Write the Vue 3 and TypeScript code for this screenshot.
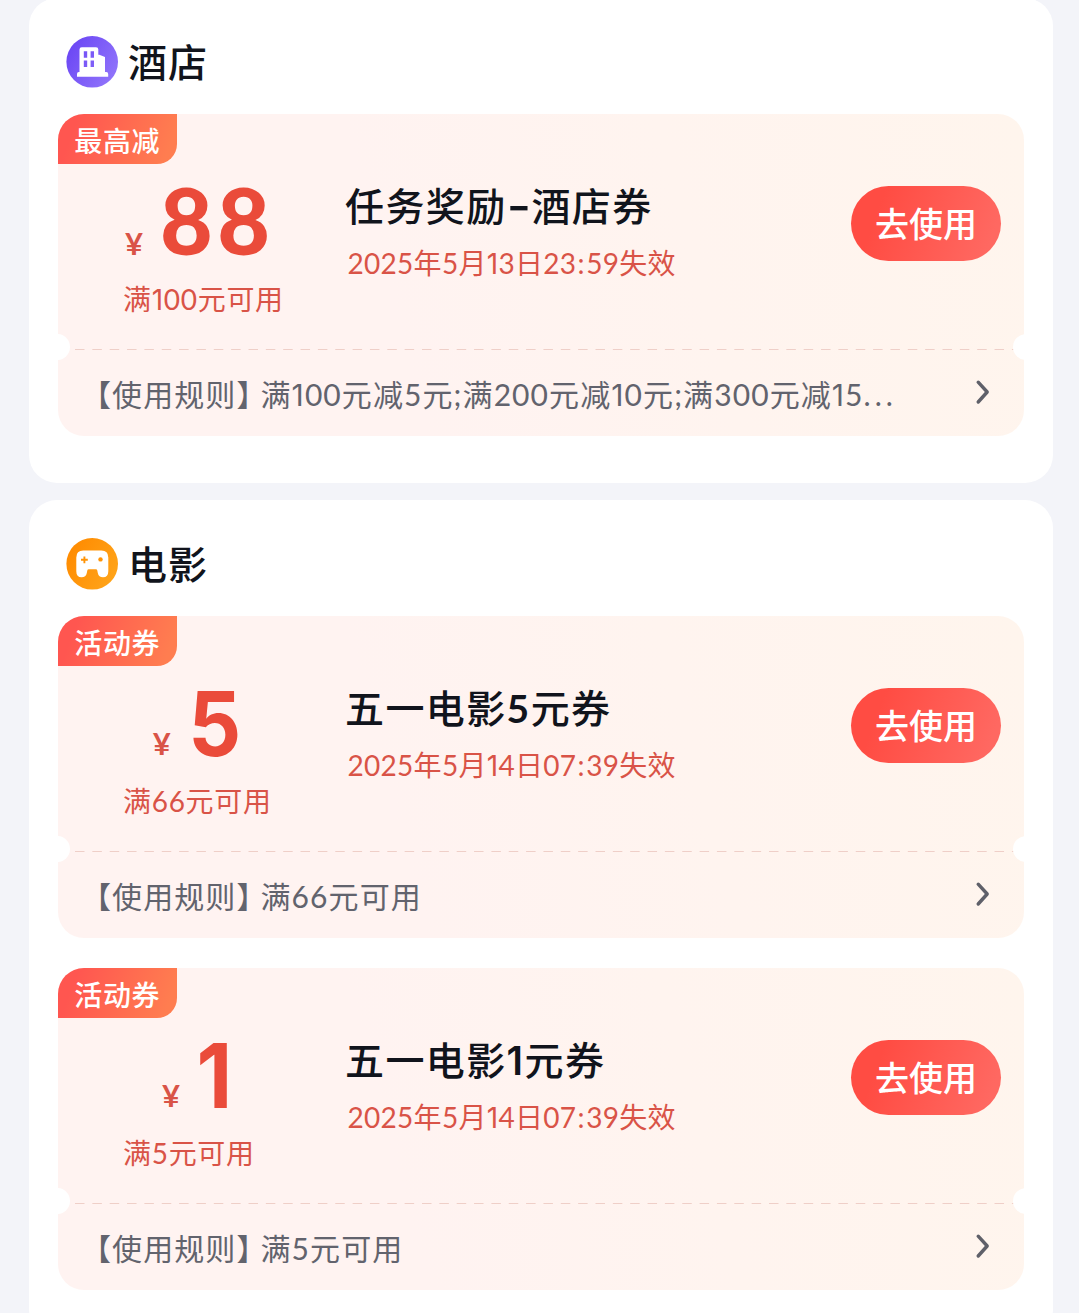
<script setup lang="ts">
interface Coupon {
  tag: string
  amount: string
  condition: string
  title: string
  expiry: string
  rule: string
}

interface Section {
  name: string
  icon: 'hotel' | 'movie'
  coupons: Coupon[]
}

interface Run {
  text: string
  kind: string
}

const sections: Section[] = [
  {
    name: '酒店',
    icon: 'hotel',
    coupons: [
      {
        tag: '最高减',
        amount: '88',
        condition: '满100元可用',
        title: '任务奖励-酒店券',
        expiry: '2025年5月13日23:59失效',
        rule: '满100元减5元;满200元减10元;满300元减15...',
      },
    ],
  },
  {
    name: '电影',
    icon: 'movie',
    coupons: [
      {
        tag: '活动券',
        amount: '5',
        condition: '满66元可用',
        title: '五一电影5元券',
        expiry: '2025年5月14日07:39失效',
        rule: '满66元可用',
      },
      {
        tag: '活动券',
        amount: '1',
        condition: '满5元可用',
        title: '五一电影1元券',
        expiry: '2025年5月14日07:39失效',
        rule: '满5元可用',
      },
    ],
  },
]

// Splits mixed text so that Latin digits and punctuation get their own face.
function runs(text: string): Run[] {
  const parts = text.match(/1|[02-9]+|-|:|;|\.+|[^0-9\-:;.]+/g) ?? []
  return parts.map((part) => {
    if (part === '1') return { text: part, kind: 'one' }
    if (/^[0-9]/.test(part)) return { text: part, kind: 'num' }
    if (part === '-') return { text: part, kind: 'dash' }
    if (part === ':') return { text: part, kind: 'colon' }
    if (part[0] === '.') return { text: part, kind: 'dots' }
    if (part === ';') return { text: part, kind: 'semi' }
    return { text: part, kind: 'han' }
  })
}
</script>

<template>
  <main class="page">
    <section v-for="section in sections" :key="section.name" class="card">
      <header class="card-head">
        <svg v-if="section.icon === 'hotel'" class="head-icon" viewBox="0 0 52 52">
          <defs>
            <linearGradient id="hotel-bg" x1="0" y1="0.2" x2="1" y2="0.8">
              <stop offset="0" stop-color="#6a45f4" />
              <stop offset="1" stop-color="#9276fb" />
            </linearGradient>
          </defs>
          <circle cx="26.200" cy="25.800" r="25.800" fill="url(#hotel-bg)" />
          <path
            fill="#fff"
            fill-rule="evenodd"
            d="M15.800 11.200h14.200q2.300 0 2.300 2.300v5.200h1l5.700 2.400v15h1.300q1.900 0 1.900 1.900v2.700H11v-2.700q0-1.900 1.900-1.900h.6V13.500q0-2.300 2.300-2.300zM17.800 15.300v6.400h3.400v-6.400zM24.600 15.300v6.400h3.400v-6.400zM17.800 24.500v6.400h3.400v-6.400zM24.600 24.500v6.400h3.400v-6.400z"
          />
        </svg>
        <svg v-else class="head-icon" viewBox="0 0 52 52">
          <defs>
            <linearGradient id="movie-bg" x1="0" y1="0.2" x2="1" y2="0.8">
              <stop offset="0" stop-color="#ff8a00" />
              <stop offset="1" stop-color="#ffa51a" />
            </linearGradient>
          </defs>
          <circle cx="26.200" cy="25.800" r="25.800" fill="url(#movie-bg)" />
          <path
            fill="#fff"
            d="M17.300 12.500h18q7 0 7 7v13.700q0 6-5.300 6-4.300 0-5.200-4.300l-.5-2.500q-.2-1.200-1.400-1.200h-7.200q-1.200 0-1.400 1.200l-.5 2.500q-.9 4.300-5.200 4.300-5.300 0-5.300-6V19.500q0-7 7-7z"
          />
          <path d="M15 21.800h6.800M18.400 18.400v6.800" stroke="#ff9305" stroke-width="1.900" />
          <circle cx="34.500" cy="21.400" r="2.200" fill="#ff9305" />
        </svg>
        <h2 class="head-name">{{ section.name }}</h2>
      </header>

      <div class="coupons">
        <article v-for="coupon in section.coupons" :key="coupon.title" class="coupon">
          <span class="tag">{{ coupon.tag }}</span>
          <div class="main">
            <div class="value">
              <div class="price">
                <span class="yen">¥</span>
                <span class="amount" :class="{ single: coupon.amount.length === 1 }">{{ coupon.amount }}</span>
              </div>
              <p class="condition">
                <span v-for="(run, i) in runs(coupon.condition)" :key="i" :class="run.kind">{{ run.text }}</span>
              </p>
            </div>
            <div class="info">
              <h3 class="title">
                <span v-for="(run, i) in runs(coupon.title)" :key="i" :class="run.kind">{{ run.text }}</span>
              </h3>
              <p class="expiry">
                <span v-for="(run, i) in runs(coupon.expiry)" :key="i" :class="run.kind">{{ run.text }}</span>
              </p>
            </div>
            <button class="use" type="button">去使用</button>
          </div>
          <svg class="divider" viewBox="0 0 966 1" preserveAspectRatio="none">
            <line x1="17" y1="0.5" x2="956" y2="0.5" stroke="#efcfc8" stroke-width="1" stroke-dasharray="9.500 7.850" />
          </svg>
          <i class="notch left"></i>
          <i class="notch right"></i>
          <footer class="rule">
            <p class="rule-text">
              <span>【使用规则</span><span class="close">】</span
              ><span v-for="(run, i) in runs(coupon.rule)" :key="i" :class="run.kind">{{ run.text }}</span>
            </p>
            <svg class="chevron" viewBox="0 0 16 28">
              <path d="M3.200 4.200L12.200 14 3.200 24" fill="none" stroke="#5f6069" stroke-width="3.400" stroke-linecap="round" stroke-linejoin="round" />
            </svg>
          </footer>
        </article>
      </div>
    </section>
  </main>
</template>

<style>
body {
  background: #f3f4f9;
  overflow: hidden;
}
</style>

<style scoped>
.page {
  box-sizing: border-box;
  height: 1313px;
  overflow: hidden;
  padding: 0 26px 0 29px;
  display: flex;
  flex-direction: column;
  gap: 17px;
  background: #f3f4f9;
  font-family: 'Noto Sans CJK SC', sans-serif;
}
h2, h3, p {
  margin: 0;
  font-weight: 400;
}
.card {
  flex: none;
  box-sizing: border-box;
  padding: 38px 29px 47px;
  border-radius: 28px;
  background: #fff;
}
.card:first-child {
  margin-top: -2px;
}
.card-head {
  display: flex;
  align-items: center;
  height: 52px;
  padding-left: 8px;
  margin-bottom: 26px;
}
.head-icon {
  width: 52px;
  height: 52px;
}
.head-name {
  margin: -5px 0 0 10px;
  font-size: 39px;
  line-height: 52px;
  font-weight: 500;
  letter-spacing: 1px;
  color: #11141c;
}
.coupons {
  display: flex;
  flex-direction: column;
  gap: 30px;
}
.coupon {
  position: relative;
  height: 322px;
  display: flex;
  flex-direction: column;
  border-radius: 26px;
  overflow: hidden;
  background: linear-gradient(75deg, #fff3f1 35%, #fff4ef 65%, #fff5ed 100%);
}
.tag {
  position: absolute;
  left: 0;
  top: 0;
  width: 118.5px;
  height: 50px;
  border-radius: 20px 0 20px 0;
  background: linear-gradient(110deg, #ff5650 15%, #ff7d50 90%);
  color: #fff;
  font-size: 28px;
  font-weight: 500;
  line-height: 52px;
  letter-spacing: 0.7px;
  text-align: center;
}
.main {
  height: 235px;
  display: flex;
}
.value {
  width: 287px;
  padding-top: 66px;
  color: #d95347;
}
.price {
  display: flex;
  justify-content: center;
  align-items: baseline;
  width: 278px;
  height: 98px;
  line-height: 80px;
  font-family: Lato, sans-serif;
}
.yen {
  font-size: 31px;
  font-weight: 700;
  margin-right: 17px;
}
.amount {
  font-size: 91px;
  font-weight: 900;
  letter-spacing: 4.5px;
  margin-right: -5.5px;
  color: #ea4b3a;
}
.amount.single {
  font-family: Inter, sans-serif;
  font-size: 90px;
  font-weight: 700;
  letter-spacing: 0;
  margin: 0 -2px 0 -2px;
  transform: translateY(1px) scaleX(0.92);
}
.price:has(.single) {
  position: relative;
  top: 1px;
}
.condition {
  padding-left: 65px;
  font-size: 28px;
  line-height: 40px;
  letter-spacing: 0.7px;
  white-space: nowrap;
}
.info {
  flex: 1;
  padding-top: 65px;
}
.title {
  font-size: 39px;
  line-height: 50px;
  font-weight: 500;
  letter-spacing: 1.4px;
  color: #11141c;
  white-space: nowrap;
}
.expiry {
  margin-top: 13px;
  padding-left: 2.4px;
  font-size: 28px;
  line-height: 40px;
  letter-spacing: 0.3px;
  color: #d95347;
  white-space: nowrap;
}
.num, .colon, .semi, .dots {
  font-family: Lato, sans-serif;
  line-height: 0;
}
.one {
  font-family: Inter, sans-serif;
  line-height: 0;
}
.colon {
  padding: 0 1.5px 0 1px;
}
.dots {
  letter-spacing: 4px;
}
.dash {
  position: relative;
  top: 4px;
  font-family: Inter, sans-serif;
  font-size: 54px;
  font-weight: 400;
  line-height: 0;
  letter-spacing: 0;
}
.title .num {
  font-weight: 700;
}
.title .one {
  font-weight: 600;
}
.use {
  width: 150px;
  height: 75px;
  margin: 72px 23px 0 0;
  padding: 0 0 2px;
  border: 0;
  border-radius: 38px;
  background: linear-gradient(110deg, #ff4c43 20%, #ff6861 90%);
  color: #fff;
  font-family: inherit;
  font-size: 34px;
  font-weight: 500;
  line-height: 73px;
}
.divider {
  display: block;
  width: 966px;
  height: 1px;
}
.notch {
  position: absolute;
  top: 220px;
  width: 26px;
  height: 26px;
  border-radius: 50%;
  background: #fff;
}
.notch.left {
  left: -14px;
}
.notch.right {
  right: -15px;
}
.rule {
  flex: 1;
  display: flex;
  align-items: center;
  justify-content: space-between;
  padding: 0 33px 0 23px;
}
.rule-text {
  font-size: 30px;
  line-height: 40px;
  letter-spacing: 1.08px;
  color: #62636d;
  white-space: nowrap;
}
.close {
  margin-right: 8px;
  font-feature-settings: 'halt';
}
.chevron {
  width: 16px;
  height: 28px;
  margin-top: -3px;
}
</style>
